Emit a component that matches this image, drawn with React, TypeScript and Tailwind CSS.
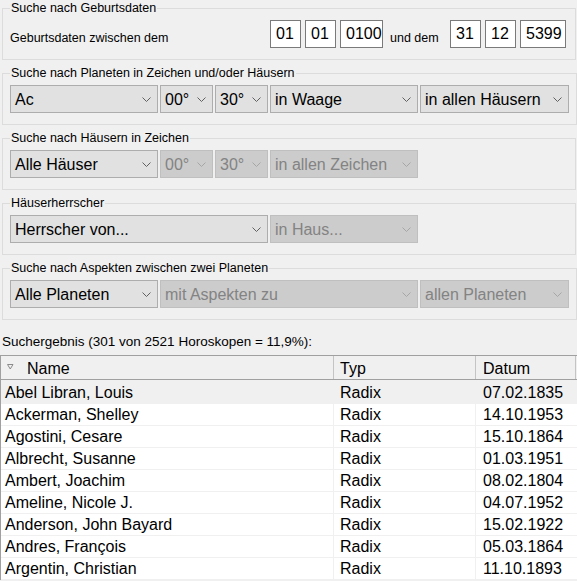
import React from 'react';

const font = { fontFamily: '"Liberation Sans", Arial, sans-serif' };

const Chevron: React.FC<{ disabled?: boolean }> = ({ disabled }) => (
  <svg width="9" height="5" viewBox="0 0 9 5" className="shrink-0">
    <path d="M0.5 0.5 L4.5 4.5 L8.5 0.5" fill="none" stroke={disabled ? '#a6a6a6' : '#606060'} strokeWidth="1" />
  </svg>
);

interface ComboProps {
  value: string;
  width: string;
  disabled?: boolean;
}

const Combo: React.FC<ComboProps> = ({ value, width, disabled }) => (
  <div
    className={`${width} h-[28px] flex items-center justify-between pl-[4px] pr-[6px] border text-[16px] ${
      disabled ? 'bg-[#cccccc] border-[#bfbfbf] text-[#838383]' : 'bg-[#e1e1e1] border-[#adadad] text-black'
    }`}
  >
    <span className="whitespace-nowrap pt-[1px]">{value}</span>
    <Chevron disabled={disabled} />
  </div>
);

const DateBox: React.FC<{ value: string; width: string }> = ({ value, width }) => (
  <div className={`${width} h-[28px] bg-white border border-[#7a7a7a] flex items-center pl-[5px] text-[16px] text-black`}>
    {value}
  </div>
);

const Group: React.FC<{ title: string; children: React.ReactNode }> = ({ title, children }) => (
  <fieldset className="ml-[2px] w-[574px] border border-[#dcdcdc] px-[7px] pt-[4px] pb-[11px]">
    <legend className="px-[1px] text-[12.5px] leading-[16px] text-black">{title}</legend>
    <div className="flex gap-[2px] h-[28px]">{children}</div>
  </fieldset>
);

const rows: [string, string, string][] = [
  ['Abel Libran, Louis', 'Radix', '07.02.1835'],
  ['Ackerman, Shelley', 'Radix', '14.10.1953'],
  ['Agostini, Cesare', 'Radix', '15.10.1864'],
  ['Albrecht, Susanne', 'Radix', '01.03.1951'],
  ['Ambert, Joachim', 'Radix', '08.02.1804'],
  ['Ameline, Nicole J.', 'Radix', '04.07.1952'],
  ['Anderson, John Bayard', 'Radix', '15.02.1922'],
  ['Andres, François', 'Radix', '05.03.1864'],
  ['Argentin, Christian', 'Radix', '11.10.1893'],
];

export default function App() {
  return (
    <div className="w-[577px] h-[581px] bg-[#f0f0f0] overflow-hidden" style={font}>
      <div className="flex flex-col gap-[5px]">
        <fieldset className="ml-[2px] w-[574px] border border-[#dcdcdc] px-[7px] pt-[4px] pb-[11px]">
          <legend className="px-[1px] text-[12.5px] leading-[16px] text-black">Suche nach Geburtsdaten</legend>
          <div className="flex h-[28px] items-end">
            <span className="w-[260px] text-[12.5px] text-black">Geburtsdaten zwischen dem</span>
            <div className="flex gap-[4px] h-[28px]">
              <DateBox value="01" width="w-[31px]" />
              <DateBox value="01" width="w-[31px]" />
              <DateBox value="0100" width="w-[43px]" />
            </div>
            <span className="w-[67px] pl-[7px] text-[12.5px] text-black">und dem</span>
            <div className="flex gap-[4px] h-[28px]">
              <DateBox value="31" width="w-[31px]" />
              <DateBox value="12" width="w-[31px]" />
              <DateBox value="5399" width="w-[46px]" />
            </div>
          </div>
        </fieldset>

        <Group title="Suche nach Planeten in Zeichen und/oder Häusern">
          <Combo value="Ac" width="w-[148px]" />
          <Combo value="00°" width="w-[53px]" />
          <Combo value="30°" width="w-[53px]" />
          <Combo value="in Waage" width="w-[148px]" />
          <Combo value="in allen Häusern" width="w-[149px]" />
        </Group>

        <Group title="Suche nach Häusern in Zeichen">
          <Combo value="Alle Häuser" width="w-[148px]" />
          <Combo value="00°" width="w-[53px]" disabled />
          <Combo value="30°" width="w-[53px]" disabled />
          <Combo value="in allen Zeichen" width="w-[148px]" disabled />
        </Group>

        <Group title="Häuserherrscher">
          <Combo value="Herrscher von..." width="w-[258px]" />
          <Combo value="in Haus..." width="w-[148px]" disabled />
        </Group>

        <Group title="Suche nach Aspekten zwischen zwei Planeten">
          <Combo value="Alle Planeten" width="w-[148px]" />
          <Combo value="mit Aspekten zu" width="w-[258px]" disabled />
          <Combo value="allen Planeten" width="w-[149px]" disabled />
        </Group>
      </div>

      <div className="pl-[2px] pt-[14px] h-[35px] text-[13.5px] leading-[16px] text-black whitespace-nowrap">
        Suchergebnis (301 von 2521 Horoskopen = 11,9%):
      </div>

      <div className="border-l border-t border-[#a0a0a0] text-[16px] text-black">
        <div className="flex h-[24px] border-b border-[#a0a0a0] bg-[#f0f0f0]">
          <div className="w-[333px] flex items-center border-r border-[#c4c4c4] pt-[3px]">
            <svg width="7" height="6" viewBox="0 0 7 6" className="ml-[6px] mr-[13px] -mt-[4px]">
              <path d="M0.5 0.5 H6 L3.25 5 Z" fill="none" stroke="#8a8a8a" strokeWidth="1" />
            </svg>
            <span>Name</span>
          </div>
          <div className="w-[142px] flex items-center pl-[6px] border-r border-[#c4c4c4] pt-[3px]">Typ</div>
          <div className="w-[100px] flex items-center pl-[7px] border-r border-[#c4c4c4] pt-[3px]">Datum</div>
          <div className="flex-1" />
        </div>
        {rows.map(([name, typ, date], i) => (
          <div
            key={name}
            className={`flex border-b border-[#f0f0f0] ${i === 0 ? 'h-[24px] pt-[2px] bg-[#f0f0f0]' : 'h-[22px] bg-white'}`}
          >
            <div className="w-[333px] flex items-center pl-[4px] border-r border-[#f0f0f0] whitespace-nowrap">{name}</div>
            <div className="w-[142px] flex items-center pl-[6px] border-r border-[#f0f0f0]">{typ}</div>
            <div className="w-[100px] flex items-center pl-[7px]">{date}</div>
            <div className="flex-1" />
          </div>
        ))}
      </div>
    </div>
  );
}
